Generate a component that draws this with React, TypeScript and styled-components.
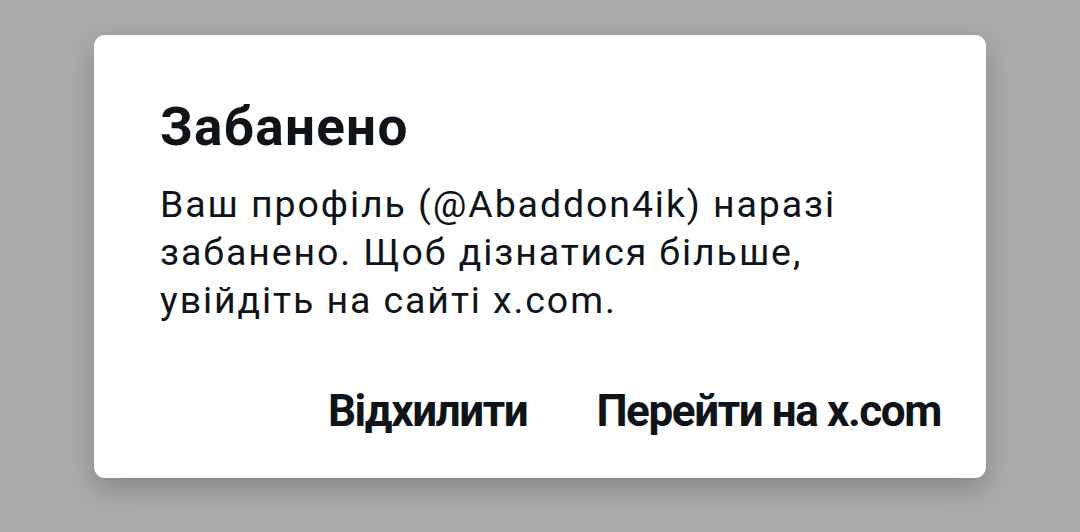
import React from "react";
import styled, { createGlobalStyle } from "styled-components";

const GlobalStyle = createGlobalStyle`
  html, body {
    margin: 0;
    padding: 0;
    background: #ababab;
  }
  body {
    font-family: Roboto, "Noto Sans", sans-serif;
  }
`;

const Backdrop = styled.div`
  width: 1080px;
  height: 532px;
  display: flex;
  justify-content: center;
  padding-top: 35px;
  box-sizing: border-box;
  background: #ababab;
`;

const Dialog = styled.div`
  width: 892px;
  height: 443px;
  box-sizing: border-box;
  background: #ffffff;
  border-radius: 11px;
  box-shadow: 0 10px 28px rgba(0, 0, 0, 0.22);
  padding: 0 45px 0 66px;
  display: flex;
  flex-direction: column;
`;

const Title = styled.h2`
  margin: 62px 0 0;
  font-family: Roboto, sans-serif;
  font-weight: 700;
  font-size: 53px;
  line-height: 60px;
  letter-spacing: 1.3px;
  color: #0f1419;
`;

const Message = styled.p`
  margin: 23px 0 0;
  font-family: Roboto, sans-serif;
  font-weight: 400;
  font-size: 37.5px;
  line-height: 48px;
  letter-spacing: 1.9px;
  color: #0f1419;
`;

const Actions = styled.div`
  display: flex;
  justify-content: flex-end;
  gap: 69px;
  margin-top: 61px;
`;

const ActionButton = styled.button`
  border: none;
  background: transparent;
  padding: 0;
  font-family: Roboto, sans-serif;
  font-weight: 700;
  font-size: 44px;
  line-height: 52px;
  letter-spacing: -1.4px;
  color: #0f1419;
  cursor: pointer;
`;

export default function App() {
  return (
    <>
      <GlobalStyle />
      <Backdrop>
        <Dialog>
          <Title>Забанено</Title>
          <Message>
            Ваш профіль (@Abaddon4ik) наразі
            <br />
            забанено. Щоб дізнатися більше,
            <br />
            увійдіть на сайті x.com.
          </Message>
          <Actions>
            <ActionButton>Відхилити</ActionButton>
            <ActionButton>Перейти на x.com</ActionButton>
          </Actions>
        </Dialog>
      </Backdrop>
    </>
  );
}
